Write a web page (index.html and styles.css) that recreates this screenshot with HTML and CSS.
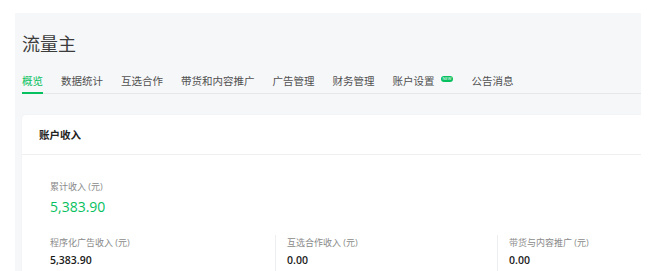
FILE: index.html
```html
<!DOCTYPE html>
<html lang="zh">
<head>
    <meta charset="UTF-8">
    <meta name="viewport" content="width=device-width, initial-scale=1.0">
    <title>流量主</title>
    <link rel="stylesheet" href="styles.css">
</head>
<body>
    <div class="page">
        <h1 class="title">流量主</h1>

        <div class="tabs">
            <span class="tab active">概览</span>
            <span class="tab">数据统计</span>
            <span class="tab">互选合作</span>
            <span class="tab">带货和内容推广</span>
            <span class="tab">广告管理</span>
            <span class="tab">财务管理</span>
            <span class="tab">账户设置<span class="badge">NEW</span></span>
            <span class="tab">公告消息</span>
        </div>

        <div class="card">
            <div class="card-header">账户收入</div>
            <div class="card-body">
                <div class="label">累计收入 (元)</div>
                <div class="total">5,383.90</div>

                <div class="stats">
                    <div class="stat">
                        <div class="label">程序化广告收入 (元)</div>
                        <div class="value">5,383.90</div>
                    </div>
                    <div class="stat">
                        <div class="label">互选合作收入 (元)</div>
                        <div class="value">0.00</div>
                    </div>
                    <div class="stat">
                        <div class="label">带货与内容推广 (元)</div>
                        <div class="value">0.00</div>
                    </div>
                </div>
            </div>
        </div>
    </div>
</body>
</html>
```

FILE: styles.css
```css
html, body {
    margin: 0;
    height: 100%;
    background: #fff;
    overflow: hidden;
}
body {
    font-family: "Open Sans", "Noto Sans CJK SC", sans-serif;
    color: #333;
}
.page {
    margin: 13px 0 0 15px;
    width: 619px;
    height: 239px;
    padding: 19px 0 0 7px;
    background: #f6f7f9;
    overflow: hidden;
}
.title {
    margin: 0;
    font-size: 18px;
    line-height: 24px;
    font-weight: normal;
    color: #3c3c3c;
}
.tabs {
    display: flex;
    gap: 18px;
    margin-top: 17px;
    border-bottom: 1px solid #e7e8ea;
    font-size: 10.5px;
    line-height: 16px;
}
.tab {
    display: flex;
    align-items: flex-start;
    padding-bottom: 3px;
    margin-bottom: -1px;
    border-bottom: 2px solid transparent;
    color: #505050;
}
.tab.active {
    color: #07c160;
    border-bottom-color: #07c160;
}
.badge {
    margin: 3px 0 0 6px;
    padding: 0 2px;
    height: 6px;
    line-height: 6px;
    font-size: 4px;
    border-radius: 3px;
    background: #07c160;
    color: #fff;
}
.card {
    margin-top: 21px;
    height: 200px;
    background: #fff;
    border-radius: 4px 0 0 0;
    box-shadow: 0 0 2px rgba(0, 0, 0, 0.06);
}
.card-header {
    height: 39px;
    line-height: 41px;
    padding-left: 17px;
    font-size: 10.5px;
    font-weight: bold;
    color: #222;
    border-bottom: 1px solid #eef0f2;
}
.card-body {
    padding: 26px 0 0 28px;
}
.label {
    font-size: 9px;
    line-height: 12px;
    color: #8a8a8a;
}
.total {
    margin-top: 4px;
    font-size: 14px;
    line-height: 20px;
    color: #07c160;
}
.stats {
    display: grid;
    grid-template-columns: 225px 222px 222px;
    margin-top: 18px;
}
.stat {
    padding-top: 1px;
    height: 60px;
}
.stat + .stat {
    padding-left: 11px;
    border-left: 1px solid #eceef0;
}
.stat .label {
    line-height: 14px;
}
.value {
    margin-top: 1px;
    font-size: 10.5px;
    line-height: 18px;
    font-weight: 600;
    color: #1a1a1a;
}
```
